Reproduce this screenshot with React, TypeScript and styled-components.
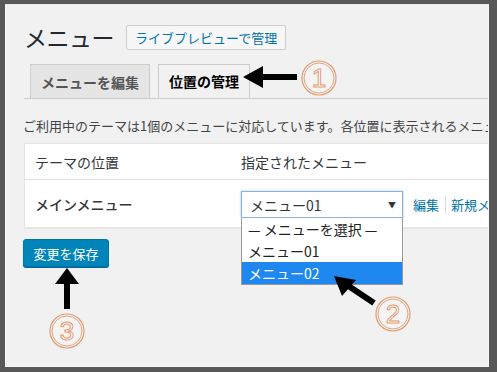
import React from 'react'
import styled, { createGlobalStyle } from 'styled-components'

const GlobalStyle = createGlobalStyle`
  html, body {
    margin: 0;
    padding: 0;
    background: #585858;
  }
  body {
    font-family: 'Noto Sans CJK JP', 'Noto Sans', sans-serif;
    color: #444;
  }
`

const Frame = styled.div`
  position: relative;
  width: 497px;
  height: 372px;
  padding: 4px 8px 5px 5px;
  box-sizing: border-box;
`

const Panel = styled.div`
  position: relative;
  height: 100%;
  background: #f1f1f1;
  border: 1px solid #fafafa;
  border-top-color: #e6e6e6;
  box-sizing: border-box;
  overflow: hidden;
  padding: 19px 0 0 18px;
`

const TitleRow = styled.div`
  display: flex;
  align-items: center;
  height: 26px;
`

const Title = styled.h1`
  margin: 0;
  font-size: 23px;
  font-weight: 400;
  color: #23282d;
  line-height: 26px;
  letter-spacing: -0.5px;
`

const PreviewButton = styled.span`
  margin-left: 12px;
  height: 25px;
  display: flex;
  align-items: center;
  padding: 0 8px;
  border: 1px solid #ccc;
  border-radius: 2px;
  background: #f7f7f7;
  color: #0073aa;
  font-size: 13px;
  box-sizing: border-box;
`

const TabBar = styled.div`
  display: flex;
  gap: 8px;
  margin-top: 14px;
  padding-left: 6px;
  border-bottom: 1px solid #ccc;
  width: 600px;
`

const Tab = styled.div<{ $active?: boolean }>`
  height: 34px;
  display: flex;
  align-items: center;
  padding: 0 10px;
  border: 1px solid #ccc;
  border-bottom: ${p => (p.$active ? '1px solid #f1f1f1' : 'none')};
  margin-bottom: ${p => (p.$active ? '-1px' : '0')};
  background: ${p => (p.$active ? '#f1f1f1' : '#e5e5e5')};
  color: ${p => (p.$active ? '#000' : '#555')};
  font-size: 14px;
  font-weight: ${p => (p.$active ? 700 : 600)};
  box-sizing: border-box;
`

const Intro = styled.p`
  margin: 17px 0 0 -1px;
  font-size: 13px;
  line-height: 19px;
  white-space: nowrap;
  color: #444;
`

const Table = styled.div`
  margin-top: 8px;
  width: 560px;
  background: #fff;
  border: 1px solid #e5e5e5;
  box-shadow: 0 1px 1px rgba(0, 0, 0, 0.04);
`

const Row = styled.div<{ $head?: boolean }>`
  display: grid;
  grid-template-columns: 216px 1fr;
  align-items: center;
  height: ${p => (p.$head ? '35px' : '47px')};
  border-bottom: ${p => (p.$head ? '1px solid #e1e1e1' : 'none')};
  font-size: 14px;
  color: #32373c;
`

const Cell = styled.div<{ $bold?: boolean }>`
  padding-left: 10px;
  font-weight: ${p => (p.$bold ? 500 : 400)};
`

const ValueCell = styled.div`
  display: flex;
  align-items: center;
  gap: 10px;
  padding-top: 2px;
`

const SelectWrap = styled.div`
  position: relative;
  width: 162px;
`

const Select = styled.div`
  height: 27px;
  display: flex;
  align-items: center;
  justify-content: space-between;
  padding: 0 6px 0 8px;
  border: 1px solid #8db3d8;
  box-shadow: 0 0 2px rgba(30, 140, 190, 0.5);
  font-size: 14px;
  color: #32373c;
  box-sizing: border-box;
  background: #fff;
`

const Caret = styled.span`
  font-size: 8px;
  color: #333;
`

const DropList = styled.div`
  position: absolute;
  top: 27px;
  left: 0;
  width: 162px;
  background: #fff;
  border: 1px solid #9a9a9a;
  border-top: none;
  box-sizing: border-box;
`

const Option = styled.div<{ $selected?: boolean }>`
  height: 22px;
  line-height: 22px;
  padding-left: 6px;
  font-size: 14px;
  background: ${p => (p.$selected ? '#1e88f0' : '#fff')};
  color: ${p => (p.$selected ? '#fff' : '#222')};
`

const Links = styled.div`
  display: flex;
  align-items: center;
  font-size: 13px;
  color: #0073aa;
  white-space: nowrap;
`

const Sep = styled.span`
  width: 1px;
  height: 18px;
  background: #ddd;
  margin: 0 5px 0 6px;
`

const SaveButton = styled.div`
  margin: 11px 0 0 -1px;
  width: 86px;
  height: 28px;
  display: flex;
  align-items: center;
  justify-content: center;
  background: #0085ba;
  border: 1px solid #0073aa;
  border-radius: 3px;
  box-shadow: 0 1px 0 #006799;
  color: #fff;
  font-size: 13px;
  box-sizing: border-box;
`

const Annotations = styled.svg`
  position: absolute;
  inset: 0;
  pointer-events: none;
`

function Badge({ x, y, n }: { x: number; y: number; n: string }) {
  return (
    <g>
      <circle cx={x} cy={y} r={17} fill="#f4f4f4" stroke="#e39a70" strokeWidth={1.2} />
      <circle cx={x} cy={y} r={15} fill="none" stroke="#e39a70" strokeWidth={0.9} />
      <text
        x={x}
        y={y + 9}
        textAnchor="middle"
        fontFamily="'Liberation Sans', sans-serif"
        fontSize={26}
        fill="#fff"
        stroke="#e39a70"
        strokeWidth={1}
      >
        {n}
      </text>
    </g>
  )
}

export default function App() {
  return (
    <>
      <GlobalStyle />
      <Frame>
        <Panel>
          <TitleRow>
            <Title>メニュー</Title>
            <PreviewButton>ライブプレビューで管理</PreviewButton>
          </TitleRow>
          <TabBar>
            <Tab>メニューを編集</Tab>
            <Tab $active>位置の管理</Tab>
          </TabBar>
          <Intro>ご利用中のテーマは1個のメニューに対応しています。各位置に表示されるメニューを選択してください。</Intro>
          <Table>
            <Row $head>
              <Cell>テーマの位置</Cell>
              <div>指定されたメニュー</div>
            </Row>
            <Row>
              <Cell $bold>メインメニュー</Cell>
              <ValueCell>
                <SelectWrap>
                  <Select>
                    <span>メニュー01</span>
                    <Caret>▼</Caret>
                  </Select>
                  <DropList>
                    <Option>— メニューを選択 —</Option>
                    <Option>メニュー01</Option>
                    <Option $selected>メニュー02</Option>
                  </DropList>
                </SelectWrap>
                <Links>
                  編集<Sep />新規メニューを作成します
                </Links>
              </ValueCell>
            </Row>
          </Table>
          <SaveButton>変更を保存</SaveButton>
        </Panel>
        <Annotations width={497} height={372} viewBox="0 0 497 372">
          {/* ① arrow pointing at the tab */}
          <rect x={258} y={74} width={39} height={6} fill="#000" />
          <polygon points="243,77 263,66 263,88" fill="#000" />
          <Badge x={319} y={78} n="1" />
          {/* ② arrow pointing at the option */}
          <line x1={374} y1={303} x2={347} y2={285} stroke="#000" strokeWidth={6} />
          <polygon points="334,276 356,280 342,296" fill="#000" />
          <Badge x={393} y={314} n="2" />
          {/* ③ arrow pointing at the save button */}
          <rect x={64} y={281} width={6} height={28} fill="#000" />
          <polygon points="67,268 55,284 79,284" fill="#000" />
          <Badge x={67} y={331} n="3" />
        </Annotations>
      </Frame>
    </>
  )
}
